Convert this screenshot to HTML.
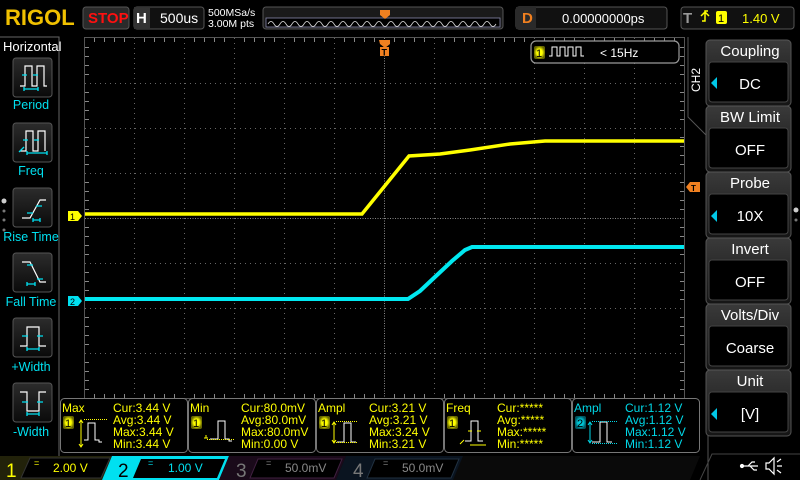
<!DOCTYPE html>
<html><head><meta charset="utf-8"><style>
html,body{margin:0;padding:0;background:#000;width:800px;height:480px;overflow:hidden}
svg{display:block}
text{font-family:"Liberation Sans",sans-serif}
</style></head><body>
<svg width="800" height="480" viewBox="0 0 800 480" xmlns="http://www.w3.org/2000/svg">
<defs>
<linearGradient id="bt" x1="0" y1="0" x2="0" y2="1"><stop offset="0" stop-color="#3a3a3a"/><stop offset="1" stop-color="#151515"/></linearGradient>
<linearGradient id="ib" x1="0" y1="0" x2="0" y2="1"><stop offset="0" stop-color="#2c2c2c"/><stop offset="1" stop-color="#0a0a0a"/></linearGradient>
<radialGradient id="yg"><stop offset="0.5" stop-color="#ffff00"/><stop offset="1" stop-color="#666600"/></radialGradient>
<radialGradient id="cg"><stop offset="0.5" stop-color="#00c8d8"/><stop offset="1" stop-color="#005560"/></radialGradient>
</defs>
<rect width="800" height="480" fill="#000"/>
<!-- top bar -->
<text x="5" y="25" font-family="Liberation Serif" font-weight="bold" font-size="22" fill="#f0c000">RIGOL</text>
<rect x="83" y="7" width="46" height="22" rx="3" fill="#2a2a2a" stroke="#555"/>
<text x="88" y="23" font-size="15" font-weight="bold" fill="#ff1010">STOP</text>
<rect x="134" y="7" width="70" height="22" rx="3" fill="#111" stroke="#555"/>
<rect x="134" y="7" width="16" height="22" fill="#333"/>
<text x="136" y="23" font-size="15" font-weight="bold" fill="#fff">H</text>
<text x="160" y="23" font-size="14" fill="#fff">500us</text>
<text x="208" y="16" font-size="10.5" fill="#fff">500MSa/s</text>
<text x="208" y="27" font-size="10.5" fill="#fff">3.00M pts</text>
<rect x="263" y="7" width="240" height="22" rx="3" fill="#1a1a1a" stroke="#555"/>
<rect x="266" y="18" width="234" height="9" fill="#000" stroke="#88a" stroke-width="0.8"/>
<path d="M268 24 q3 -5 6 0 t6 0 t6 0 t6 0 t6 0 t6 0 t6 0 t6 0 t6 0 t6 0 t6 0 t6 0 t6 0 t6 0 t6 0 t6 0 t6 0 t6 0 t6 0 t6 0 t6 0 t6 0 t6 0 t6 0 t6 0 t6 0 t6 0 t6 0 t6 0 t6 0 t6 0 t6 0 t6 0 t6 0 t6 0 t6 0 t6 0 t6 0" fill="none" stroke="#ddd" stroke-width="0.8"/>
<path d="M380 10 h10 v5 l-5 4 l-5 -4z" fill="#f08020"/>
<rect x="516" y="7" width="151" height="22" rx="3" fill="#111" stroke="#555"/>
<rect x="516" y="7" width="20" height="22" fill="#2a2a2a"/>
<text x="522" y="23" font-size="15" font-weight="bold" fill="#f08020">D</text>
<text x="562" y="23" font-size="13" fill="#fff">0.00000000ps</text>
<rect x="681" y="7" width="113" height="22" rx="3" fill="#111" stroke="#555"/>
<text x="683" y="23" font-size="15" font-weight="bold" fill="#999">T</text>
<path d="M702 21 h3 v-10 h3 M701 16 l4 -4 l4 4" fill="none" stroke="#ff0" stroke-width="1.5"/>
<rect x="716" y="11" width="11" height="13" rx="2" fill="#ff0"/>
<text x="718" y="22" font-size="11" fill="#000">1</text>
<text x="742" y="23" font-size="13" fill="#ff0">1.40 V</text>
<!-- left panel -->
<path d="M0 37 h59 v421" fill="none" stroke="#666"/>
<text x="3" y="51" font-size="13" fill="#fff">Horizontal</text>
<g>
<rect x="13" y="58" width="39" height="39" rx="3" fill="url(#ib)" stroke="#555"/>
<rect x="13" y="123" width="39" height="39" rx="3" fill="url(#ib)" stroke="#555"/>
<rect x="13" y="188" width="39" height="39" rx="3" fill="url(#ib)" stroke="#555"/>
<rect x="13" y="253" width="39" height="39" rx="3" fill="url(#ib)" stroke="#555"/>
<rect x="13" y="318" width="39" height="39" rx="3" fill="url(#ib)" stroke="#555"/>
<rect x="13" y="383" width="39" height="39" rx="3" fill="url(#ib)" stroke="#555"/>
</g>
<g fill="none" stroke="#fff" stroke-width="1.2">
<path d="M20 86 h5 v-20 h7 v20 h5 v-20 h7 v20 h3"/>
<path d="M20 151 h6 v-20 h7 v20 h5 v-20 h7 v20"/>
<path d="M22 218 h8 l10 -18 h6"/>
<path d="M22 262 h8 l10 20 h6"/>
<path d="M20 346 h7 v-19 h12 v19 h7"/>
<path d="M20 392 h7 v19 h12 v-19 h7"/>
</g>
<g fill="none" stroke="#00e0f0" stroke-width="1.3">
<path d="M22 75 h5 M33 75 h5 M24 89 h14 M24 87 v4 M38 87 v4"/>
<path d="M23 140 h5 M34 140 h5 M27 153 h20 M27 151 v4 M47 151 v4 M19 152 l5 -5"/>
<path d="M27 213 h6 M36 206 h6 M33 220 h7 M33 218 v4 M40 218 v4"/>
<path d="M27 265 h6 M37 279 h6 M27 284 h8 M27 282 v4 M35 282 v4"/>
<path d="M22 336 h6 M37 336 h6 M27 349 h12 M27 347 v4 M39 347 v4"/>
<path d="M22 402 h6 M37 402 h6 M27 414 h12 M27 412 v4 M39 412 v4"/>
</g>
<g font-size="12.5" fill="#00e0f0" text-anchor="middle">
<text x="31" y="109">Period</text>
<text x="31" y="175">Freq</text>
<text x="31" y="241">Rise Time</text>
<text x="31" y="306">Fall Time</text>
<text x="31" y="371">+Width</text>
<text x="31" y="436">-Width</text>
</g>
<circle cx="4" cy="201" r="2.5" fill="#ccc"/><circle cx="4" cy="211" r="1.5" fill="#777"/><circle cx="4" cy="220" r="1.5" fill="#777"/><circle cx="4" cy="230" r="1.5" fill="#777"/>
<!-- plot frame -->
<path d="M84.5 37.5 H684.5 V398.5 H84.5Z" fill="none" stroke="#555"/>
<g stroke="#666" stroke-width="1" stroke-dasharray="1,4">
<path d="M134.5 38V398 M184.5 38V398 M234.5 38V398 M284.5 38V398 M334.5 38V398 M434.5 38V398 M484.5 38V398 M534.5 38V398 M584.5 38V398 M634.5 38V398"/>
<path d="M85 83.5H684 M85 128.5H684 M85 173.5H684 M85 263.5H684 M85 308.5H684 M85 353.5H684"/>
</g>
<g stroke="#888" stroke-width="1" stroke-dasharray="1,1.5">
<path d="M384.5 38V398 M85 218.5H684"/>
</g>
<g stroke="#888">
<path d="M94.5 38v4M104.5 38v4M114.5 38v4M124.5 38v4M144.5 38v4M154.5 38v4M164.5 38v4M174.5 38v4M194.5 38v4M204.5 38v4M214.5 38v4M224.5 38v4M244.5 38v4M254.5 38v4M264.5 38v4M274.5 38v4M294.5 38v4M304.5 38v4M314.5 38v4M324.5 38v4M344.5 38v4M354.5 38v4M364.5 38v4M374.5 38v4M394.5 38v4M404.5 38v4M414.5 38v4M424.5 38v4M444.5 38v4M454.5 38v4M464.5 38v4M474.5 38v4M494.5 38v4M504.5 38v4M514.5 38v4M524.5 38v4M544.5 38v4M554.5 38v4M564.5 38v4M574.5 38v4M594.5 38v4M604.5 38v4M614.5 38v4M624.5 38v4M644.5 38v4M654.5 38v4M664.5 38v4M674.5 38v4"/>
<path d="M94.5 398v-4M104.5 398v-4M114.5 398v-4M124.5 398v-4M144.5 398v-4M154.5 398v-4M164.5 398v-4M174.5 398v-4M194.5 398v-4M204.5 398v-4M214.5 398v-4M224.5 398v-4M244.5 398v-4M254.5 398v-4M264.5 398v-4M274.5 398v-4M294.5 398v-4M304.5 398v-4M314.5 398v-4M324.5 398v-4M344.5 398v-4M354.5 398v-4M364.5 398v-4M374.5 398v-4M394.5 398v-4M404.5 398v-4M414.5 398v-4M424.5 398v-4M444.5 398v-4M454.5 398v-4M464.5 398v-4M474.5 398v-4M494.5 398v-4M504.5 398v-4M514.5 398v-4M524.5 398v-4M544.5 398v-4M554.5 398v-4M564.5 398v-4M574.5 398v-4M594.5 398v-4M604.5 398v-4M614.5 398v-4M624.5 398v-4M644.5 398v-4M654.5 398v-4M664.5 398v-4M674.5 398v-4"/>
<path d="M85 47.5h4M85 56.5h4M85 65.5h4M85 74.5h4M85 92.5h4M85 101.5h4M85 110.5h4M85 119.5h4M85 137.5h4M85 146.5h4M85 155.5h4M85 164.5h4M85 182.5h4M85 191.5h4M85 200.5h4M85 209.5h4M85 227.5h4M85 236.5h4M85 245.5h4M85 254.5h4M85 272.5h4M85 281.5h4M85 290.5h4M85 299.5h4M85 317.5h4M85 326.5h4M85 335.5h4M85 344.5h4M85 362.5h4M85 371.5h4M85 380.5h4M85 389.5h4"/>
<path d="M684 47.5h-4M684 56.5h-4M684 65.5h-4M684 74.5h-4M684 92.5h-4M684 101.5h-4M684 110.5h-4M684 119.5h-4M684 137.5h-4M684 146.5h-4M684 155.5h-4M684 164.5h-4M684 182.5h-4M684 191.5h-4M684 200.5h-4M684 209.5h-4M684 227.5h-4M684 236.5h-4M684 245.5h-4M684 254.5h-4M684 272.5h-4M684 281.5h-4M684 290.5h-4M684 299.5h-4M684 317.5h-4M684 326.5h-4M684 335.5h-4M684 344.5h-4M684 362.5h-4M684 371.5h-4M684 380.5h-4M684 389.5h-4"/>
</g>
<path d="M379 40 h11 v4 l-5 4 l-5 -4z" fill="#f08020"/>
<rect x="380" y="47" width="9" height="9" fill="#f08020"/>
<text x="381.5" y="55.5" font-size="9" font-weight="bold" fill="#000">T</text>
<!-- waveforms -->
<path d="M85 214 H362 L409 156 L440 154 L470 150 L510 144 L545 141 L684 141" fill="none" stroke="#ffff00" stroke-width="3.5"/>
<path d="M85 299 H408 L420 291 L436 276 L452 261 L465 250 L472 247 H684" fill="none" stroke="#00e8f0" stroke-width="4"/>
<path d="M68 211 h10 l4 5 l-4 5 h-10z" fill="#ffff00"/><text x="70" y="220" font-size="9" fill="#000">1</text>
<path d="M68 296 h10 l4 5 l-4 5 h-10z" fill="#00e0f0"/><text x="70" y="305" font-size="9" fill="#000">2</text>
<path d="M686 187 l4 -5 h10 v10 h-10z" fill="#f08020"/><text x="691" y="191" font-size="8" font-weight="bold" fill="#000">T</text>
<rect x="531" y="41" width="148" height="22" rx="5" fill="#000" stroke="#999" stroke-width="1.2"/>
<rect x="534" y="46" width="11" height="13" rx="2" fill="url(#yg)"/><text x="536" y="57" font-size="11" fill="#000">1</text>
<path d="M549 56 h3 v-9 h5 v9 h3 v-9 h5 v9 h3 v-9 h5 v9 h3 v-9 h5 v9 h3" fill="none" stroke="#fff" stroke-width="1"/>
<text x="600" y="57" font-size="12" fill="#fff">&lt; 15Hz</text>
<!-- right panel -->
<path d="M688 37 v80 l20 20 v343" fill="none" stroke="#555"/>
<text x="700" y="80" font-size="12" fill="#fff" transform="rotate(-90 700 80)" text-anchor="middle">CH2</text>
<g>
<rect x="706" y="40" width="85" height="66" rx="4" fill="url(#bt)" stroke="#555"/>
<rect x="709" y="62" width="79" height="40" rx="3" fill="#000" stroke="#444"/>
<rect x="706" y="106" width="85" height="66" rx="4" fill="url(#bt)" stroke="#555"/>
<rect x="709" y="128" width="79" height="40" rx="3" fill="#000" stroke="#444"/>
<rect x="706" y="172" width="85" height="66" rx="4" fill="url(#bt)" stroke="#555"/>
<rect x="709" y="194" width="79" height="40" rx="3" fill="#000" stroke="#444"/>
<rect x="706" y="238" width="85" height="66" rx="4" fill="url(#bt)" stroke="#555"/>
<rect x="709" y="260" width="79" height="40" rx="3" fill="#000" stroke="#444"/>
<rect x="706" y="304" width="85" height="66" rx="4" fill="url(#bt)" stroke="#555"/>
<rect x="709" y="326" width="79" height="40" rx="3" fill="#000" stroke="#444"/>
<rect x="706" y="370" width="85" height="66" rx="4" fill="url(#bt)" stroke="#555"/>
<rect x="709" y="392" width="79" height="40" rx="3" fill="#000" stroke="#444"/>
</g>
<g font-size="15" fill="#fff" text-anchor="middle">
<text x="750" y="56">Coupling</text><text x="750" y="89">DC</text>
<text x="750" y="122">BW Limit</text><text x="750" y="155">OFF</text>
<text x="750" y="188">Probe</text><text x="750" y="221">10X</text>
<text x="750" y="254">Invert</text><text x="750" y="287">OFF</text>
<text x="750" y="320">Volts/Div</text><text x="750" y="353">Coarse</text>
<text x="750" y="386">Unit</text><text x="750" y="419">[V]</text>
</g>
<g fill="#00c8e8">
<path d="M717 77 l-6 6 l6 6z"/><path d="M717 210 l-6 6 l6 6z"/><path d="M717 408 l-6 6 l6 6z"/>
</g>
<circle cx="796" cy="210" r="2.5" fill="#ccc"/><circle cx="796" cy="220" r="1.5" fill="#777"/>
<!-- measurement boxes -->
<g fill="#000" stroke="#777">
<rect x="60.5" y="398.5" width="127" height="54" rx="4"/>
<rect x="188.5" y="398.5" width="127" height="54" rx="4"/>
<rect x="316.5" y="398.5" width="127" height="54" rx="4"/>
<rect x="444.5" y="398.5" width="127" height="54" rx="4"/>
<rect x="572.5" y="398.5" width="127" height="54" rx="4"/>
</g>
<g font-size="12" fill="#ffff00">
<text x="62" y="412">Max</text>
<text x="113" y="412">Cur:3.44 V</text><text x="113" y="424">Avg:3.44 V</text><text x="113" y="436">Max:3.44 V</text><text x="113" y="448">Min:3.44 V</text>
<text x="190" y="412">Min</text>
<text x="241" y="412">Cur:80.0mV</text><text x="241" y="424">Avg:80.0mV</text><text x="241" y="436">Max:80.0mV</text><text x="241" y="448">Min:0.00 V</text>
<text x="318" y="412">Ampl</text>
<text x="369" y="412">Cur:3.21 V</text><text x="369" y="424">Avg:3.21 V</text><text x="369" y="436">Max:3.24 V</text><text x="369" y="448">Min:3.21 V</text>
<text x="446" y="412">Freq</text>
<text x="497" y="412">Cur:*****</text><text x="497" y="424">Avg:*****</text><text x="497" y="436">Max:*****</text><text x="497" y="448">Min:*****</text>
</g>
<g font-size="12" fill="#00d8e8">
<text x="574" y="412">Ampl</text>
<text x="625" y="412">Cur:1.12 V</text><text x="625" y="424">Avg:1.12 V</text><text x="625" y="436">Max:1.12 V</text><text x="625" y="448">Min:1.12 V</text>
</g>
<g>
<rect x="63" y="416" width="11" height="13" rx="2" fill="url(#yg)"/><text x="65" y="427" font-size="11" fill="#000">1</text>
<rect x="191" y="416" width="11" height="13" rx="2" fill="url(#yg)"/><text x="193" y="427" font-size="11" fill="#000">1</text>
<rect x="319" y="416" width="11" height="13" rx="2" fill="url(#yg)"/><text x="321" y="427" font-size="11" fill="#000">1</text>
<rect x="447" y="416" width="11" height="13" rx="2" fill="url(#yg)"/><text x="449" y="427" font-size="11" fill="#000">1</text>
<rect x="575" y="416" width="11" height="13" rx="2" fill="url(#cg)"/><text x="577" y="427" font-size="11" fill="#000">2</text>
</g>
<g fill="none" stroke="#fff" stroke-width="1">
<path d="M84 440 h4 v-17 h7 v17 h4 v2 h3"/>
<path d="M210 439 h8 v-18 h7 v18 h4 v2 h3"/>
<path d="M337 442 h7 v-19 h7 v19 h5"/>
<path d="M465 441 h6 v-20 h7 v20 h5"/>
<path d="M592 442 h8 v-20 h7 v20 h5"/>
</g>
<g fill="none" stroke="#ffff00" stroke-width="1">
<path d="M81 421v25 M79 423l2-3 2 3 M79 444l2 3 2-3"/><path d="M84 419.5h23" stroke-dasharray="1,1"/>
<path d="M204 438h4 M206 435v3"/><path d="M207 439.5h28" stroke-dasharray="1,1"/>
<path d="M334 423v19 M332 425l2-3 2 3 M332 440l2 3 2-3"/><path d="M336 421.5h22 M336 442.5h22" stroke-dasharray="1,1"/>
<path d="M468 431h4 M477 431h4 M470 445h16 M460 444l4-4"/>
</g>
<g fill="none" stroke="#00d8e8" stroke-width="1">
<path d="M590 423v19 M588 425l2-3 2 3 M588 440l2 3 2-3"/><path d="M592 421.5h26 M592 443.5h26" stroke-dasharray="1,1"/>
</g>
<!-- bottom bar -->
<path d="M0 456 H700 L690 480 H0z" fill="#0a0a0a"/>
<path d="M0 456 h112 l-10 24 h-102z" fill="#22220a"/>
<text x="6" y="477" font-size="19" fill="#ffff00">1</text>
<path d="M30 458 h80 l-9 20 h-80z" fill="#000" stroke="#333"/>
<text x="34" y="466" font-size="9" fill="#ffff00">=</text>
<text x="53" y="472" font-size="12" fill="#ffff00">2.00 V</text>
<path d="M112 456 h117 l-10 24 h-117z" fill="#00e0f0"/>
<text x="118" y="477" font-size="19" fill="#000">2</text>
<path d="M141 459 h84 l-8 19 h-84z" fill="#000"/>
<text x="148" y="466" font-size="9" fill="#00e0f0">=</text>
<text x="168" y="472" font-size="12" fill="#00e0f0">1.00 V</text>
<path d="M229 456 h117 l-10 24 h-117z" fill="#1a0a1a"/>
<text x="236" y="477" font-size="19" fill="#777">3</text>
<path d="M258 459 h84 l-8 19 h-84z" fill="#000" stroke="#402040"/>
<text x="266" y="466" font-size="9" fill="#888">=</text>
<text x="285" y="472" font-size="12" fill="#888">50.0mV</text>
<path d="M346 456 h117 l-10 24 h-117z" fill="#0a1420"/>
<text x="353" y="477" font-size="19" fill="#777">4</text>
<path d="M375 459 h84 l-8 19 h-84z" fill="#000" stroke="#203040"/>
<text x="383" y="466" font-size="9" fill="#888">=</text>
<text x="402" y="472" font-size="12" fill="#888">50.0mV</text>
<path d="M700 480 L712 454 H800" fill="none" stroke="#444"/>
<g stroke="#fff" fill="none" stroke-width="1.2">
<path d="M742 466 h16 M748 466 l4 -4 h3 M750 466 l4 4 h3"/>
<circle cx="742" cy="466" r="1.5" fill="#fff"/>
<path d="M766 463 h3 l5 -5 v16 l-5 -5 h-3z M777 466 h5 M777 462 l4 -3 M777 470 l4 3"/>
</g>
</svg>
</body></html>
